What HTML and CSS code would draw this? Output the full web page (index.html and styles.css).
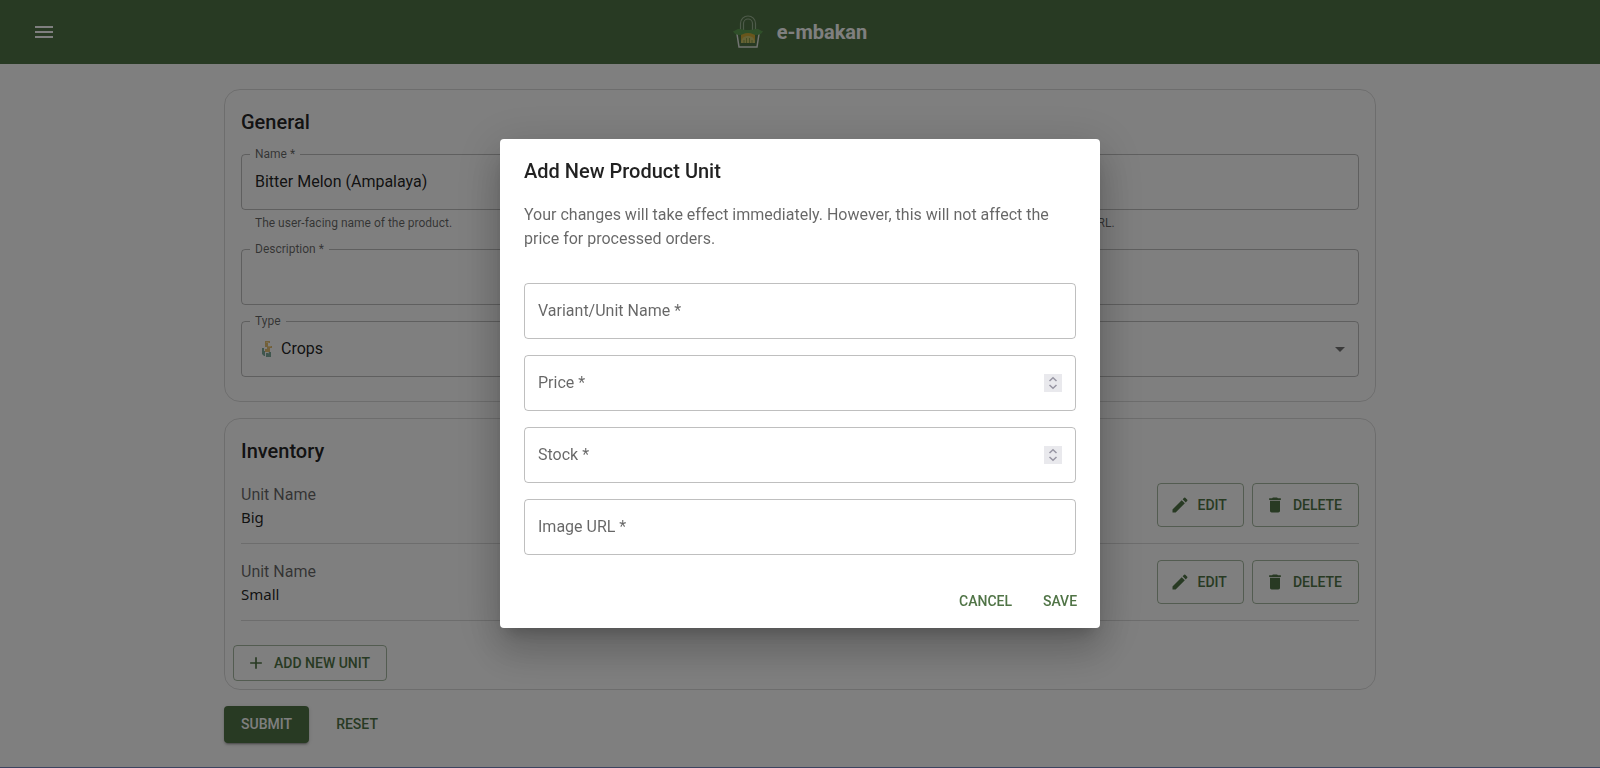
FILE: index.html
```html
<!DOCTYPE html>
<html lang="en">
<head>
<meta charset="utf-8">
<title>e-mbakan</title>
<link rel="stylesheet" href="styles.css">
</head>
<body>
<svg class="sprite" aria-hidden="true">
  <symbol id="edit" viewBox="0 0 24 24"><path d="M3 17.25V21h3.75L17.81 9.94l-3.75-3.75L3 17.25zM20.71 7.04c.39-.39.39-1.02 0-1.41l-2.34-2.34a.9959.9959 0 0 0-1.41 0l-1.83 1.83 3.75 3.75 1.83-1.83z"/></symbol>
  <symbol id="trash" viewBox="0 0 24 24"><path d="M6 19c0 1.100.9 2 2 2h8c1.100 0 2-.9 2-2V7H6v12zM19 4h-3.500l-1-1h-5l-1 1H5v2h14V4z"/></symbol>
  <symbol id="plus" viewBox="0 0 24 24"><path d="M19 13h-6v6h-2v-6H5v-2h6V5h2v6h6v2z"/></symbol>
  <symbol id="spin" viewBox="0 0 18 18"><path d="M0 0h18v18H0z" fill="#e9e9ed"/><path d="M5.500 7 9 3.700 12.500 7M5.500 11 9 14.300 12.500 11" fill="none" stroke="#9795a3" stroke-width="1.500"/></symbol>
</svg>

<header class="appbar">
  <button class="menu" type="button" aria-label="Menu">
    <svg viewBox="0 0 24 24"><path d="M3 18h18v-2H3v2zm0-5h18v-2H3v2zm0-7v2h18V6H3z"/></svg>
  </button>
  <a class="brand" href="#">
    <svg class="logo" viewBox="0 0 30 34" aria-hidden="true">
      <path d="M7.500 16V8.500a7.500 7.500 0 0 1 15 0V16M10.500 16V8.500a4.500 4.500 0 0 1 9 0V16" fill="none" stroke="#9db695" stroke-width="1.200"/>
      <path d="M4 19l2 13h18l2-13" fill="none" stroke="#e4e9e2" stroke-width="1.500"/>
      <path d="M8 18h14v10H8z" fill="#d2ac38"/>
      <path d="M8 28c0-4.500 3-7 7-7s7 2.500 7 7z" fill="#cdc66c"/>
      <path d="M11 28v-3M13.500 28v-5M16.500 28v-5M19 28v-3" stroke="#8a9f45" stroke-width="1"/>
      <path d="M0 16c3 0 3-2 6-2 3 0 4 1 9 1s6-1 9-1c3 0 3 2 6 2-1 3-4 4-7 4-2 0-4-2-8-2s-6 2-8 2c-3 0-6-1-7-4z" fill="#5f9f52"/>
    </svg>
    <span>e-mbakan</span>
  </a>
</header>

<main class="page">
  <section class="card">
    <h2>General</h2>
    <div class="stack">
      <div class="columns">
        <div>
          <div class="field raised">
            <label for="name">Name *</label>
            <input id="name" type="text" value="Bitter Melon (Ampalaya)">
          </div>
          <p class="helper">The user-facing name of the product.</p>
        </div>
        <div>
          <div class="field raised">
            <label for="slug">Slug *</label>
            <input id="slug" type="text">
          </div>
          <p class="helper">The unique identifier to be shown on the product's URL.</p>
        </div>
      </div>
      <div class="field raised">
        <label for="description">Description *</label>
        <input id="description" type="text">
      </div>
      <div class="field raised">
        <label for="type">Type</label>
        <svg class="crop" viewBox="0 0 12 16" aria-hidden="true">
          <path d="M4 0h5v2H7v3h4v2H9v4H4V8h2V6H4z" fill="#d9a83a"/>
          <path d="M5 1h3v1H5zM7 5h3v1H7z" fill="#f0ca6a"/>
          <path d="M1 7h2v3h1v5H3l-2-2zM5 12h2v4H5zM8 11h2v5H7v-3z" fill="#4c8a74"/>
        </svg>
        <select id="type"><option>Crops</option></select>
        <svg class="arrow" viewBox="0 0 24 24" aria-hidden="true"><path d="m7 10 5 5 5-5z"/></svg>
      </div>
    </div>
  </section>

  <section class="card inventory">
    <h2>Inventory</h2>
    <ul class="units">
      <li>
        <dl><dt>Unit Name</dt><dd>Big</dd></dl>
        <button class="btn outlined" type="button"><svg><use href="#edit"/></svg>EDIT</button>
        <button class="btn outlined" type="button"><svg><use href="#trash"/></svg>DELETE</button>
      </li>
      <li>
        <dl><dt>Unit Name</dt><dd>Small</dd></dl>
        <button class="btn outlined" type="button"><svg><use href="#edit"/></svg>EDIT</button>
        <button class="btn outlined" type="button"><svg><use href="#trash"/></svg>DELETE</button>
      </li>
    </ul>
    <div class="card-actions">
      <button class="btn outlined" type="button"><svg><use href="#plus"/></svg>ADD NEW UNIT</button>
    </div>
  </section>

  <div class="form-actions">
    <button class="btn contained" type="button">SUBMIT</button>
    <button class="btn" type="button">RESET</button>
  </div>
</main>

<div class="backdrop">
  <form class="dialog" role="dialog" aria-labelledby="dialog-title">
    <h2 id="dialog-title">Add New Product Unit</h2>
    <div class="dialog-body">
      <p>Your changes will take effect immediately. However, this will not affect the price for processed orders.</p>
      <div class="stack">
        <div class="field"><label for="unit">Variant/Unit Name *</label><input id="unit" type="text"></div>
        <div class="field"><label for="price">Price *</label><input id="price" type="number"><svg class="spin" aria-hidden="true"><use href="#spin"/></svg></div>
        <div class="field"><label for="stock">Stock *</label><input id="stock" type="number"><svg class="spin" aria-hidden="true"><use href="#spin"/></svg></div>
        <div class="field"><label for="image">Image URL *</label><input id="image" type="text"></div>
      </div>
    </div>
    <div class="dialog-actions">
      <button class="btn" type="button">CANCEL</button>
      <button class="btn" type="button">SAVE</button>
    </div>
  </form>
</div>
</body>
</html>
```
FILE: styles.css
```css
:root {
  --green: #507446;
  --text: rgba(0, 0, 0, 0.87);
  --muted: rgba(0, 0, 0, 0.6);
  --divider: rgba(0, 0, 0, 0.14);
  --outline: rgba(0, 0, 0, 0.25);
}

* { box-sizing: border-box; }

body {
  margin: 0;
  background: #fff;
  color: var(--text);
  font: 16px/24px Roboto, "Liberation Sans", sans-serif;
}

h2, p, ul, dl, dd { margin: 0; padding: 0; }
h2 { font-size: 20px; line-height: 32px; font-weight: 500; }
button, input, select { font: inherit; color: inherit; }

.sprite { display: none; }

/* App bar */
.appbar {
  display: grid;
  grid-template-columns: 1fr auto 1fr;
  align-items: center;
  height: 64px;
  padding: 0 24px;
  background: var(--green);
  color: #fff;
}

.menu {
  justify-self: start;
  display: flex;
  padding: 8px;
  border: 0;
  background: none;
}

.menu svg { width: 24px; height: 24px; fill: currentColor; }

.brand {
  display: flex;
  align-items: center;
  gap: 14px;
  color: inherit;
  text-decoration: none;
  font-size: 20px;
  font-weight: 700;
}

.logo { width: 30px; height: 34px; }

/* Page */
.page {
  display: flex;
  flex-direction: column;
  gap: 16px;
  max-width: 1200px;
  margin: 0 auto;
  padding: 25px 24px 24px;
}

.card {
  padding: 16px 16px 24px;
  border: 1px solid var(--divider);
  border-radius: 16px;
}

.card h2 { margin-bottom: 16px; }

.stack { display: flex; flex-direction: column; gap: 16px; }
.columns { display: grid; grid-template-columns: 1fr 1fr; gap: 16px; }

/* Fields */
.field {
  position: relative;
  display: flex;
  align-items: center;
  height: 56px;
  padding: 0 13px;
  border: 1px solid var(--outline);
  border-radius: 4px;
}

.field input, .field select {
  flex: 1;
  min-width: 0;
  height: 100%;
  padding: 0;
  border: 0;
  outline: 0;
  background: none;
  appearance: none;
}

.field input { padding-bottom: 2px; }
.field input[type="number"] { appearance: textfield; }
.field input::-webkit-inner-spin-button { display: none; }

.field label {
  position: absolute;
  left: 13px;
  top: 15px;
  color: var(--muted);
}

.field.raised label {
  left: 8px;
  top: -11px;
  padding: 0 5px;
  background: #fff;
  font-size: 12px;
  line-height: 20px;
}

.helper {
  padding: 3px 14px 0;
  color: var(--muted);
  font-size: 12px;
  line-height: 20px;
}

.crop { width: 12px; height: 16px; margin: 0 8px 0 6px; opacity: 0.7; }
.arrow { width: 24px; height: 24px; margin-right: -7px; fill: rgba(0, 0, 0, 0.54); }
.spin { width: 18px; height: 18px; }

/* Inventory */
.inventory { padding-bottom: 8px; }
.units { list-style: none; }

.units li {
  display: flex;
  gap: 8px;
  padding-bottom: 16px;
  border-bottom: 1px solid var(--divider);
}

.units li + li { padding-top: 16px; }
.units dl { flex: 1; }
.units dt { color: var(--muted); }
.units dd { font-family: "Noto Sans", "Open Sans", sans-serif; line-height: 20px; font-size: 15px; }
.card-actions { margin: 24px -8px 0; }

/* Buttons */
.btn {
  display: inline-flex;
  align-items: center;
  justify-content: center;
  min-width: 64px;
  padding: 6px 8px;
  border: 0;
  border-radius: 4px;
  background: none;
  color: var(--green);
  font-size: 14px;
  line-height: 25px;
  font-weight: 500;
}

.btn svg { width: 20px; height: 20px; margin: 0 8px 0 -4px; fill: currentColor; }
.btn.outlined { padding: 5px 16px; border: 1px solid rgba(80, 116, 70, 0.5); line-height: 24px; }

.btn.contained {
  padding: 6px 17px;
  background: var(--green);
  color: #fff;
  box-shadow: 0 3px 1px -2px rgba(0, 0, 0, 0.2), 0 2px 2px 0 rgba(0, 0, 0, 0.14), 0 1px 5px 0 rgba(0, 0, 0, 0.12);
}

.form-actions { display: flex; gap: 16px; }

/* Dialog */
.backdrop {
  position: fixed;
  inset: 0;
  display: flex;
  align-items: center;
  justify-content: center;
  border-bottom: 1px solid #3c4460;
  background: rgba(0, 0, 0, 0.5);
}

.dialog {
  width: 100%;
  max-width: 600px;
  border-radius: 4px;
  background: #fff;
  box-shadow: 0 11px 15px -7px rgba(0, 0, 0, 0.2), 0 24px 38px 3px rgba(0, 0, 0, 0.14), 0 9px 46px 8px rgba(0, 0, 0, 0.12);
}

.dialog h2 { padding: 16px 24px; }
.dialog-body { padding: 0 24px 20px; }
.dialog-body p { margin-bottom: 32px; color: var(--muted); }

.dialog-actions {
  display: flex;
  justify-content: flex-end;
  gap: 8px;
  padding: 8px;
}
```
